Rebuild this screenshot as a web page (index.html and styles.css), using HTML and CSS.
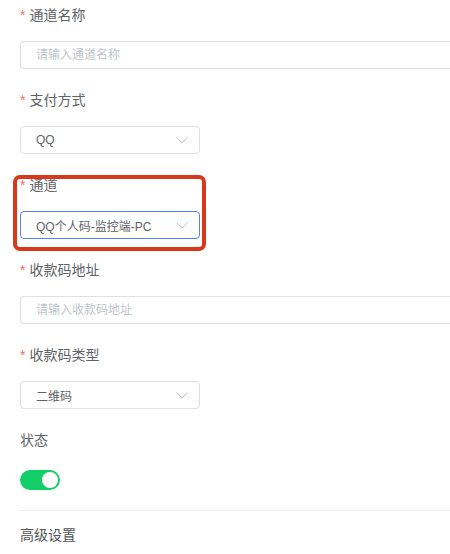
FILE: index.html
```html
<!DOCTYPE html>
<html lang="zh">
<head>
<meta charset="utf-8">
<link rel="stylesheet" href="styles.css">
</head>
<body>
<form class="form">
  <div class="item">
    <label class="label"><span class="req">*</span>通道名称</label>
    <div class="control"><input class="input wide" placeholder="请输入通道名称"></div>
  </div>
  <div class="item">
    <label class="label"><span class="req">*</span>支付方式</label>
    <div class="control">
      <div class="select"><span>QQ</span>
        <svg class="arrow" viewBox="0 0 12 7" width="12" height="7"><path d="M0.5 0.5 L6 6 L11.5 0.5" fill="none" stroke="#c0c4cc" stroke-width="1"/></svg>
      </div>
    </div>
  </div>
  <div class="item marked">
    <label class="label"><span class="req">*</span>通道</label>
    <div class="control">
      <div class="select focus"><span>QQ个人码-监控端-PC</span>
        <svg class="arrow" viewBox="0 0 12 7" width="12" height="7"><path d="M0.5 0.5 L6 6 L11.5 0.5" fill="none" stroke="#c0c4cc" stroke-width="1"/></svg>
      </div>
    </div>
    <div class="mark"></div>
  </div>
  <div class="item">
    <label class="label"><span class="req">*</span>收款码地址</label>
    <div class="control"><input class="input wide" placeholder="请输入收款码地址"></div>
  </div>
  <div class="item">
    <label class="label"><span class="req">*</span>收款码类型</label>
    <div class="control">
      <div class="select"><span>二维码</span>
        <svg class="arrow" viewBox="0 0 12 7" width="12" height="7"><path d="M0.5 0.5 L6 6 L11.5 0.5" fill="none" stroke="#c0c4cc" stroke-width="1"/></svg>
      </div>
    </div>
  </div>
  <div class="item">
    <label class="label">状态</label>
    <div class="control"><span class="switch"><span class="knob"></span></span></div>
  </div>
  <div class="divider"></div>
  <div class="section">高级设置</div>
</form>
</body>
</html>
```
FILE: styles.css
```css
html, body {
  margin: 0;
  padding: 0;
  overflow: hidden;
  background: #ffffff;
}
body {
  font-family: "Helvetica Neue", "Liberation Sans", Arial, "Noto Sans CJK SC", sans-serif;
  color: #606266;
}
.form {
  box-sizing: border-box;
  width: 450px;
  padding-left: 20px;
}
.item {
  position: relative;
  margin-bottom: 16px;
}
.label {
  display: block;
  height: 30px;
  line-height: 30px;
  font-size: 14px;
  color: #606266;
  margin-bottom: 11px;
}
.req {
  color: #f56c6c;
  margin-right: 4px;
}
.control {
  height: 28px;
  display: flex;
  align-items: center;
}
.input {
  box-sizing: border-box;
  height: 28px;
  border: 1px solid #dcdfe6;
  border-radius: 4px;
  padding: 0 15px;
  font-size: 12px;
  font-family: inherit;
  color: #606266;
  outline: none;
  background: #fff;
}
.input::placeholder {
  color: #c0c4cc;
}
.wide {
  width: 100%;
  border-right: 0;
  border-top-right-radius: 0;
  border-bottom-right-radius: 0;
}
.select {
  box-sizing: border-box;
  width: 180px;
  height: 28px;
  border: 1px solid #dcdfe6;
  border-radius: 4px;
  padding: 0 11px 0 15px;
  font-size: 12px;
  color: #606266;
  display: flex;
  align-items: center;
  justify-content: space-between;
}
.select.focus {
  border-color: #4f86ee;
}
.arrow {
  display: block;
}
.mark {
  position: absolute;
  left: -7px;
  top: 5px;
  width: 193px;
  height: 76px;
  box-sizing: border-box;
  border: 4px solid #d8391b;
  border-radius: 7px;
  pointer-events: none;
}
.switch {
  position: relative;
  display: inline-block;
  width: 40px;
  height: 20px;
  border-radius: 10px;
  background: #13ce66;
}
.knob {
  position: absolute;
  right: 2px;
  top: 2px;
  width: 16px;
  height: 16px;
  border-radius: 50%;
  background: #fff;
}
.divider {
  height: 1px;
  background: #ebedf2;
}
.section {
  margin-top: 9px;
  height: 30px;
  line-height: 30px;
  font-size: 14px;
  color: #505256;
}
```
